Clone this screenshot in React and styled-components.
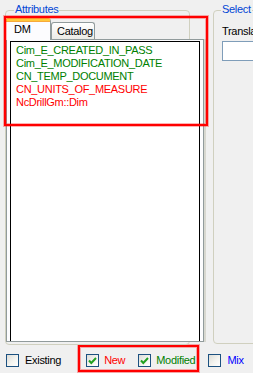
import styled, { createGlobalStyle } from 'styled-components'

const GlobalStyle = createGlobalStyle`
  html, body {
    margin: 0;
    padding: 0;
    background: #f0f0f0;
  }
  body {
    font-family: "Liberation Sans", Arial, sans-serif;
    font-size: 11px;
    letter-spacing: -0.3px;
    line-height: 13px;
  }
`

const Window = styled.div`
  position: relative;
  width: 253px;
  height: 373px;
  overflow: hidden;
  display: flex;
  flex-direction: column;
`

const TopRow = styled.div`
  display: flex;
  margin-top: 10px;
  height: 334px;
`

const Group = styled.div`
  position: relative;
  box-sizing: border-box;
  border: 1px solid #d0d0bf;
  border-radius: 4px;
  flex-shrink: 0;
`

const AttrGroup = styled(Group)`
  margin-left: 5px;
  width: 185px;
  height: 335px;
  padding-top: 7px;
`

const SelectGroup = styled(Group)`
  margin-left: 23px;
  width: 80px;
  height: 334px;
  padding: 14px 0 0 8px;
`

const GroupTitle = styled.span`
  position: absolute;
  top: -8px;
  left: ${p => p.$left}px;
  padding: 0 1px;
  background: #f0f0f0;
  color: #0046d5;
  white-space: nowrap;
`

const TabStrip = styled.div`
  display: flex;
  align-items: flex-end;
  height: 21px;
  margin-left: -1px;
`

const Tab = styled.div`
  box-sizing: border-box;
  display: flex;
  align-items: center;
  border: 1px solid #919b9c;
  border-bottom: none;
  border-radius: 3px 3px 0 0;
  white-space: nowrap;
  color: #000;
  ${p => p.$active ? `
    position: relative;
    z-index: 1;
    width: 46px;
    height: 22px;
    margin-bottom: -1px;
    padding: 0 0 2px 8px;
    background: #fcfcfe;
    border-top: 3px solid #ffc83c;
    box-shadow: inset 0 1px 0 #f7a93a;
  ` : `
    width: 44px;
    height: 17px;
    padding-left: 5px;
    background: linear-gradient(#ffffff, #ecebe6);
  `}
`

const Panel = styled.div`
  box-sizing: border-box;
  display: flex;
  flex-direction: column;
  width: 198px;
  height: 303px;
  border: 1px solid #919b9c;
  background: #fcfcfe;
  box-shadow: 2px 0 0 #d8d8d0;
  padding: 1px 3px 0 3px;
`

const ListBox = styled.div`
  flex: 1;
  border: 1px solid #000;
  border-bottom: none;
  background: #fff;
  padding: 2px 0 0 5px;
  overflow: hidden;
`

const ListItem = styled.div`
  height: 13px;
  white-space: nowrap;
  color: ${p => p.$color};
`

const FieldLabel = styled.div`
  color: #000;
  white-space: nowrap;
`

const TextBox = styled.div`
  box-sizing: border-box;
  margin-top: 3px;
  width: 80px;
  height: 20px;
  border: 1px solid #7f9db9;
  background: #fff;
`

const BottomRow = styled.div`
  display: flex;
  align-items: flex-start;
  padding-left: 6px;
  height: 29px;
`

const CheckItem = styled.label`
  display: flex;
  align-items: center;
  gap: ${p => p.$gap ?? 6}px;
  margin-top: ${p => p.$top ?? 10}px;
  margin-left: ${p => p.$left ?? 0}px;
  color: ${p => p.$color};
  white-space: nowrap;
`

const Box = styled.span`
  box-sizing: border-box;
  display: flex;
  align-items: center;
  justify-content: center;
  width: 13px;
  height: 13px;
  border: 1px solid #1c5180;
  background: linear-gradient(135deg, #dcdcd7 0%, #f4f4f0 55%, #ffffff 100%);
`

const Highlight = styled.div`
  box-sizing: border-box;
  display: flex;
  align-items: flex-start;
  margin-left: 17px;
  margin-top: 1px;
  height: 27px;
  padding: 7px 2px 0 6px;
  border: 2px solid #ff0000;
  box-shadow: 0 0 0 1px rgba(255, 0, 0, 0.3), inset 0 0 0 1px rgba(255, 0, 0, 0.3);
`

const Annotation = styled.div`
  position: absolute;
  left: 4px;
  top: 16px;
  width: 204px;
  height: 110px;
  box-sizing: border-box;
  border: 2px solid #ff0000;
  box-shadow: 0 0 0 1px rgba(255, 0, 0, 0.3), inset 0 0 0 1px rgba(255, 0, 0, 0.3);
  pointer-events: none;
  z-index: 5;
`

const Check = ({ checked }) => (
  <Box>
    {checked && (
      <svg width="9" height="9" viewBox="0 0 9 9">
        <polyline points="1,4.5 3.3,7 8,2" fill="none" stroke="#21a121" strokeWidth="2" />
      </svg>
    )}
  </Box>
)

const attributes = [
  { name: 'Cim_E_CREATED_IN_PASS', color: '#008000' },
  { name: 'Cim_E_MODIFICATION_DATE', color: '#008000' },
  { name: 'CN_TEMP_DOCUMENT', color: '#008000' },
  { name: 'CN_UNITS_OF_MEASURE', color: '#ff0000' },
  { name: 'NcDrillGm::Dim', color: '#ff0000' },
]

export default function App() {
  return (
    <Window>
      <GlobalStyle />
      <TopRow>
        <AttrGroup>
          <GroupTitle $left={8}>Attributes</GroupTitle>
          <TabStrip>
            <Tab $active>DM</Tab>
            <Tab>Catalog</Tab>
          </TabStrip>
          <Panel>
            <ListBox>
              {attributes.map(a => (
                <ListItem key={a.name} $color={a.color}>{a.name}</ListItem>
              ))}
            </ListBox>
          </Panel>
        </AttrGroup>
        <SelectGroup>
          <GroupTitle $left={7}>Select</GroupTitle>
          <FieldLabel>Translation</FieldLabel>
          <TextBox />
        </SelectGroup>
      </TopRow>
      <BottomRow>
        <CheckItem $color="#000">
          <Check />
          Existing
        </CheckItem>
        <Highlight>
          <CheckItem $top={0} $gap={5} $color="#ff0000">
            <Check checked />
            New
          </CheckItem>
          <CheckItem $top={0} $gap={5} $left={13} $color="#008000">
            <Check checked />
            Modified
          </CheckItem>
        </Highlight>
        <CheckItem $left={9} $color="#0000ff">
          <Check />
          Mix
        </CheckItem>
      </BottomRow>
      <Annotation />
    </Window>
  )
}
